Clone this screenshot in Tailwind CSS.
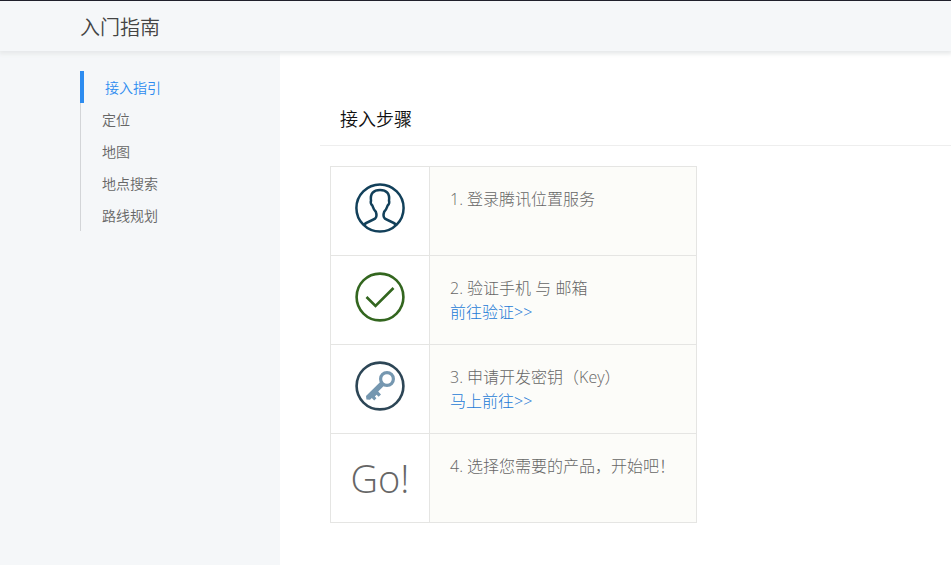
<!DOCTYPE html>
<html lang="zh-CN">
<head>
  <meta charset="UTF-8">
  <meta name="viewport" content="width=device-width, initial-scale=1">
  <title>入门指南</title>
  <script src="https://cdn.jsdelivr.net/npm/@tailwindcss/browser@4"></script>
</head>
<body class="flex min-h-screen flex-col bg-white font-['Open_Sans','Noto_Sans_CJK_SC',sans-serif] text-[#666]">
  <header class="relative border-t border-[#20202c] bg-[#f5f7f9] pt-1 pl-20 shadow-[0_2px_4px_1px_#e7e9ea]">
    <h1 class="text-xl leading-[46px] font-[350] text-[#444]">入门指南</h1>
  </header>

  <div class="flex flex-1">
    <aside class="w-[280px] shrink-0 bg-[#f5f7f9] pt-5 pl-20">
      <nav class="flex flex-col text-sm leading-[30px] font-[350]">
        <a href="#guide" class="border-l-4 border-[#2d8cf0] pt-[2px] pl-[21px] text-[#2d8cf0]">接入指引</a>
        <a href="#location" class="border-l border-[#d3d5d8] pt-[2px] pl-[21px]">定位</a>
        <a href="#map" class="border-l border-[#d3d5d8] pt-[2px] pl-[21px]">地图</a>
        <a href="#search" class="border-l border-[#d3d5d8] pt-[2px] pl-[21px]">地点搜索</a>
        <a href="#route" class="border-l border-[#d3d5d8] pt-[2px] pl-[21px]">路线规划</a>
      </nav>
    </aside>

    <main id="guide" class="flex-1 pt-10 pl-10">
      <h2 class="border-b border-[#eee] px-5 pt-[10px] pb-2 text-lg leading-9 font-[350] text-[#111]">接入步骤</h2>

      <table class="mt-5 ml-[10px] border-collapse leading-6 font-light">
        <tbody>
          <tr class="h-[89px]">
            <td class="w-[99px] border border-[#e5e5e3] pt-4 align-top">
              <svg class="mx-auto size-[50px]" viewBox="0 0 50 50" fill="none" stroke="#12405a" stroke-width="2.5" stroke-linejoin="round">
                <circle cx="25" cy="25" r="23.6"/>
                <path d="M8.5 42C12 38.5 18 37.5 20.2 35.5C21.6 34 21.6 31 20.8 28.8C18.8 27 18.1 24.5 17.4 22.6C15.8 21.5 15.4 19.2 16 17.8C15 10.5 18.5 7 25 7C31.5 7 35 10.5 34 17.8C34.6 19.2 34.2 21.5 32.6 22.6C31.9 24.5 31.2 27 29.2 28.8C28.4 31 28.4 34 29.8 35.5C32 37.5 38 38.5 41.5 42"/>
              </svg>
            </td>
            <td class="w-[267px] border border-[#e5e5e3] bg-[#fcfcf9] px-5 pt-5 align-top">1. 登录腾讯位置服务</td>
          </tr>
          <tr class="h-[89px]">
            <td class="border border-[#e5e5e3] pt-4 align-top">
              <svg class="mx-auto size-[50px]" viewBox="0 0 50 50" fill="none" stroke="#33661f" stroke-width="2.6">
                <circle cx="25" cy="25" r="23.4"/>
                <path d="M11.5 25L20.5 34L38.5 16"/>
              </svg>
            </td>
            <td class="border border-[#e5e5e3] bg-[#fcfcf9] px-5 pt-5 align-top">
              <p>2. 验证手机 与 邮箱</p>
              <a href="#verify" class="text-[#1c7ad6]">前往验证&gt;&gt;</a>
            </td>
          </tr>
          <tr class="h-[89px]">
            <td class="border border-[#e5e5e3] pt-4 align-top">
              <svg class="mx-auto size-[50px]" viewBox="0 0 50 50" fill="none">
                <circle cx="25" cy="25" r="23.4" stroke="#2d4656" stroke-width="2.6"/>
                <circle cx="32" cy="18" r="6.4" stroke="#7597b0" stroke-width="3.2"/>
                <path d="M25.2 21L29 24.8L23.2 30.6L26 33.4L23.6 35.8L21.6 33.8L19.8 35.6L21.4 37.2L19.2 39.4L16.8 37L15 38.8L11.4 38.4L11 34.9Z" fill="#7597b0"/>
              </svg>
            </td>
            <td class="border border-[#e5e5e3] bg-[#fcfcf9] px-5 pt-5 align-top">
              <p>3. 申请开发密钥（Key）</p>
              <a href="#key" class="text-[#1c7ad6]">马上前往&gt;&gt;</a>
            </td>
          </tr>
          <tr class="h-[89px]">
            <td class="border border-[#e5e5e3] text-center align-middle text-[38px] leading-none">Go!</td>
            <td class="border border-[#e5e5e3] bg-[#fcfcf9] px-5 pt-5 align-top">4. 选择您需要的产品，开始吧！</td>
          </tr>
        </tbody>
      </table>
    </main>
  </div>
</body>
</html>
